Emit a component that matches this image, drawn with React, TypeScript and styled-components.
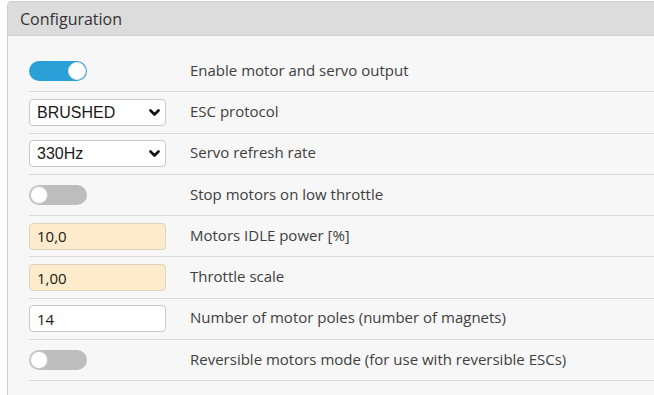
import React, { useState } from 'react'
import styled, { createGlobalStyle } from 'styled-components'

const GlobalStyle = createGlobalStyle`
  html, body {
    margin: 0;
    padding: 0;
    background: #ffffff;
    overflow: hidden;
  }
  body {
    font-family: 'Open Sans', 'Liberation Sans', sans-serif;
  }
`

type Row =
  | { kind: 'toggle'; label: string; on: boolean }
  | { kind: 'select'; label: string; value: string; options: string[] }
  | { kind: 'input'; label: string; value: string; warn?: boolean }

const rows: Row[] = [
  { kind: 'toggle', label: 'Enable motor and servo output', on: true },
  { kind: 'select', label: 'ESC protocol', value: 'BRUSHED', options: ['PWM', 'ONESHOT125', 'MULTISHOT', 'BRUSHED', 'DSHOT150', 'DSHOT300', 'DSHOT600'] },
  { kind: 'select', label: 'Servo refresh rate', value: '330Hz', options: ['50Hz', '160Hz', '200Hz', '330Hz', '400Hz'] },
  { kind: 'toggle', label: 'Stop motors on low throttle', on: false },
  { kind: 'input', label: 'Motors IDLE power [%]', value: '10,0', warn: true },
  { kind: 'input', label: 'Throttle scale', value: '1,00', warn: true },
  { kind: 'input', label: 'Number of motor poles (number of magnets)', value: '14' },
  { kind: 'toggle', label: 'Reversible motors mode (for use with reversible ESCs)', on: false },
]

const Switch = ({ on }: { on: boolean }) => {
  const [checked, setChecked] = useState(on)
  return (
    <Track $on={checked} onClick={() => setChecked(!checked)}>
      <Knob $on={checked} />
    </Track>
  )
}

const Chevron = () => (
  <svg width="11" height="8" viewBox="0 0 11 8">
    <path d="M1.5 1.5 L5.5 5.5 L9.5 1.5" fill="none" stroke="#111" strokeWidth="2.6" strokeLinecap="round" strokeLinejoin="round" />
  </svg>
)

const App = () => {
  return (
    <>
      <GlobalStyle />
      <Panel>
        <Header>Configuration</Header>
        <Body>
          {rows.map((row) => (
            <RowLine key={row.label}>
              <Control>
                {row.kind === 'toggle' && <Switch on={row.on} />}
                {row.kind === 'select' && (
                  <SelectWrap>
                    <Select defaultValue={row.value}>
                      {row.options.map((o) => (
                        <option key={o}>{o}</option>
                      ))}
                    </Select>
                    <Arrow>
                      <Chevron />
                    </Arrow>
                  </SelectWrap>
                )}
                {row.kind === 'input' && <Field $warn={row.warn} defaultValue={row.value} />}
              </Control>
              <Label>{row.label}</Label>
            </RowLine>
          ))}
        </Body>
      </Panel>
    </>
  )
}

export default App

const Panel = styled.div`
  margin: 1px 0 0 7px;
  width: 720px;
  height: 420px;
  border: 1px solid #cfcfcf;
  border-radius: 4px 0 0 0;
  background: #f7f7f7;
  overflow: hidden;
`

const Header = styled.div`
  height: 34px;
  box-sizing: border-box;
  padding: 0 12px;
  display: flex;
  align-items: center;
  background: #dcdcdc;
  border-bottom: 1px solid #d2d2d2;
  font-size: 16px;
  color: #333;
`

const Body = styled.div`
  padding: 15px 0 0 21px;
`

const RowLine = styled.div`
  height: 41.3px;
  box-sizing: border-box;
  display: flex;
  align-items: center;
  border-bottom: 1px solid #d9d9d9;
`

const Control = styled.div`
  width: 161px;
  flex-shrink: 0;
  display: flex;
  align-items: center;
`

const Label = styled.div`
  font-size: 15px;
  color: #404040;
  margin-top: -3px;
`

const Track = styled.div<{ $on: boolean }>`
  width: 58px;
  height: 20px;
  border-radius: 10px;
  background: ${(p) => (p.$on ? '#2b9fd8' : '#bdbdbd')};
  display: flex;
  align-items: center;
  justify-content: ${(p) => (p.$on ? 'flex-end' : 'flex-start')};
  padding: 0 1px;
  box-sizing: border-box;
  cursor: pointer;
`

const Knob = styled.div<{ $on: boolean }>`
  width: 18px;
  height: 18px;
  border-radius: 50%;
  background: #fff;
  box-sizing: border-box;
  border: 1px solid ${(p) => (p.$on ? '#e8e8e8' : '#cccccc')};
`

const SelectWrap = styled.div`
  position: relative;
  width: 137px;
  height: 27px;
`

const Select = styled.select`
  appearance: none;
  width: 100%;
  height: 100%;
  box-sizing: border-box;
  border: 1px solid #c8c8c8;
  border-radius: 4px;
  background: #fff;
  padding: 0 0 0 7px;
  font-family: 'Liberation Sans', Arial, sans-serif;
  font-size: 16px;
  color: #1a1a1a;
  outline: none;
`

const Arrow = styled.span`
  position: absolute;
  right: 6px;
  top: 10px;
  pointer-events: none;
  display: flex;
`

const Field = styled.input<{ $warn?: boolean }>`
  width: 137px;
  height: 27px;
  box-sizing: border-box;
  border: 1px solid ${(p) => (p.$warn ? '#ddd3bf' : '#c8c8c8')};
  border-radius: 4px;
  background: ${(p) => (p.$warn ? '#fdebcb' : '#fff')};
  padding: 0 0 0 7px;
  font-family: 'Open Sans', sans-serif;
  font-size: 15px;
  color: #1a1a1a;
  outline: none;
`
